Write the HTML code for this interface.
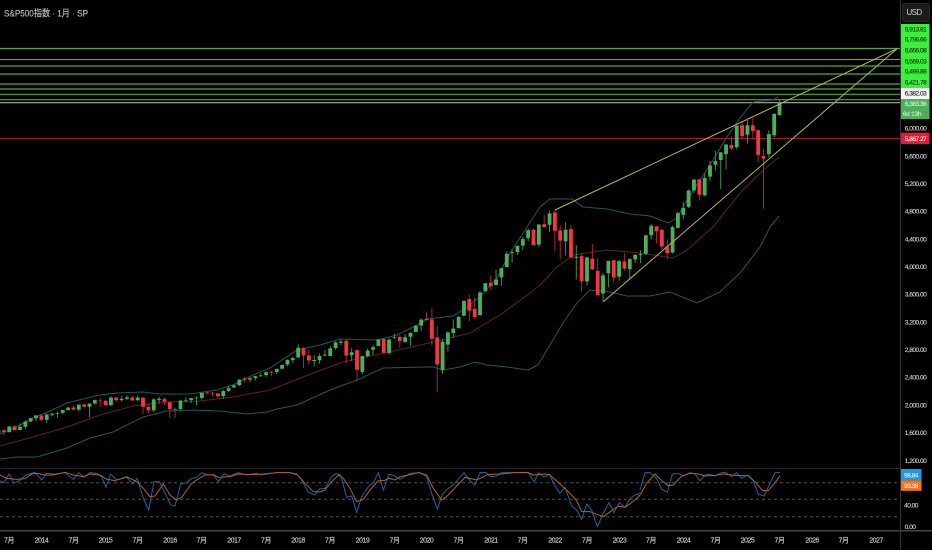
<!DOCTYPE html>
<html lang="ja"><head><meta charset="utf-8"><title>S&amp;P500指数</title>
<style>
html,body{margin:0;padding:0;background:#000;width:932px;height:550px;overflow:hidden}
svg{display:block;filter:blur(.3px)}
text{font-family:"Liberation Sans","Noto Sans CJK JP",sans-serif}
path,polyline{fill:none;vector-effect:non-scaling-stroke}
.ax text{font-size:6.6px;letter-spacing:-.52px;text-anchor:middle;fill:#d4d4d4;stroke:#d4d4d4;stroke-width:.1px}
.t text{font-size:7px;letter-spacing:-.5px;text-anchor:middle;fill:#c8c8c8;stroke:#c8c8c8;stroke-width:.15px}
.d text{fill:#0c2a0b;stroke:#0c2a0b}
</style></head><body>
<svg width="932" height="550" viewBox="0 0 932 550" xmlns="http://www.w3.org/2000/svg">
<rect width="932" height="550" fill="#000"/>
<!-- horizontal levels -->
<g stroke="#58a53c" stroke-width="1.15" fill="none">
<path d="M0 48.5H900M0 59.5H900M0 66H900M0 74H900M0 84H900M0 89H900M0 94.3H900M0 99.7H900"/>
</g>
<path d="M0 102.7H900" stroke="#a6b29c" stroke-width="1.15"/>
<path d="M0 138.5H900" stroke="#981c28" stroke-width="1"/>
<!-- bollinger -->
<polyline stroke="#1d5a58" points="0,434 20,425 33,418 50,411 67,403 83,399 100,395 117,393 143,392 160,394 190,394 217,390 233,385 253,375 270,368 297,350 320,345 340,339 377,340 397,335 417,325 427,319 453,316 463,310 480,297 497,278 510,253 527,227 540,207 550,199 572,199 583,207 607,209 630,214 650,216 668,223 677,218 687,200 700,180 713,160 727,137 740,118 753,102 773,100 778,97"/>
<polyline stroke="#572428" points="0,446 33,437 67,427 100,415 133,406 167,402 200,401 233,397 270,390 303,377 343,362 370,356 403,349 433,342 470,333 503,313 530,293 540,285 557,267 573,255 607,250 640,253 673,258 687,250 713,227 740,193 760,173 779,157"/>
<polyline stroke="#1d5a58" points="0,459 17,457 37,457 67,448 90,438 113,432 143,417 167,411 193,410 220,411 247,414 267,412 277,409 297,405 330,390 357,380 383,368 427,367 433,367 443,370 460,367 475,362 487,365 507,367 528,370 538,365 547,350 560,328 565,320 577,303 590,290 610,292 627,296 650,296 670,292 697,303 720,292 740,273 760,247 770,227 779,216"/>
<!-- candles -->
<g transform="matrix(5.349 0 0 -0.0692 9.3 543.2)">
<path stroke="#3e8f4c" stroke-width="1" d="M-2 1687V1581M0 1698V1604M2 1730V1633M3 1776V1646M4 1814V1747M5 1849V1768M7 1868V1737M8 1884V1835M9 1897V1814M10 1925V1863M11 1968V1915M13 2006V1905M15 2019V1821M16 2076V2001M19 2120V1980M21 2126V2048M22 2135V2067M24 2133V2045M27 2094V1893M28 2116V2019M32 2073V1931M33 2111V2034M34 2103V2026M35 2120V1992M36 2178V2074M40 2214V2084M41 2278V2187M42 2301V2245M43 2371V2271M45 2399V2328M46 2418V2352M47 2454V2405M48 2484V2407M50 2519V2446M51 2582V2521M52 2657V2557M53 2694V2605M54 2873V2683M57 2717V2553M58 2742V2594M59 2791V2698M60 2848V2698M61 2917V2795M62 2941V2864M64 2815V2631M66 2708V2443M67 2813V2681M68 2861V2722M69 2949V2848M71 2964V2729M72 3028V2952M74 3022V2891M75 3050V2855M76 3155V3050M77 3248V3070M81 2954V2447M82 3068V2767M83 3233V2966M84 3280V3115M85 3515V3280M88 3645V3280M89 3760V3633M91 3950V3725M92 3983V3723M93 4218V3992M94 4238V4056M95 4302V4164M96 4429V4233M97 4545V4367M99 4608V4278M101 4808V4495M104 4637V4157M106 4307V3810M108 4140V3721M111 3905V3491M112 4080V3698M114 4094V3794M116 4110V3808M117 4170V4049M118 4231V4048M119 4458V4166M120 4607V4385M124 4587V4187M125 4793V4547M126 4931V4682M127 5111V4845M128 5264V5056M130 5341V5011M131 5523V5234M132 5669V5390M133 5651V5119M134 5767V5402M136 6044V5696M138 6128V5773M142 5968V5578M143 6215V5861M144 6410V6177"/>
<path stroke="#a32a38" stroke-width="1" d="M-1 1654V1560M1 1709V1627M6 1850V1770M12 1991V1930M14 2019V1964M17 2094V1972M18 2072V1988M20 2118V2039M23 2130V2057M25 2113V1867M26 2021V1872M29 2104V1993M30 2038V1812M31 1963V1810M37 2194V2147M38 2187V2120M39 2169V2097M44 2401V2322M49 2491V2417M55 2835V2533M56 2801V2585M63 2940V2603M65 2800V2346M70 2954V2750M73 3013V2822M78 3338V3214M79 3394V2855M80 3136V2191M86 3588V3210M87 3550V3234M90 3870V3663M98 4546V4305M100 4743V4560M102 4818V4222M103 4595V4114M105 4593V4124M107 4177V3636M109 4325V3954M110 4119V3584M113 4100V3764M115 4195V3943M121 4584V4335M122 4541V4238M123 4393V4103M129 5263V4953M135 5878V5674M137 6099V5832M139 6147V5837M140 5986V5504M141 5700V4835"/>
<path stroke="#4caf5a" stroke-width="3.8" d="M-2 1597V1631M0 1606V1686M2 1635V1682M3 1682V1757M4 1758V1806M5 1806V1848M7 1782V1859M8 1857V1872M9 1873V1884M10 1884V1924M11 1924V1960M13 1930V2003M15 1971V2018M16 2019V2068M19 1996V2105M21 2067V2086M22 2088V2107M24 2067V2104M27 1919V2079M28 2072V2088M32 1937V2060M33 2057V2065M34 2067V2097M35 2094V2103M36 2099V2174M40 2128V2199M41 2201V2239M42 2251V2279M43 2285V2364M45 2363V2384M46 2388V2412M47 2415V2423M48 2431V2470M50 2474V2519M51 2521V2575M52 2583V2648M53 2645V2674M54 2683V2824M57 2633V2648M58 2643V2705M59 2712V2725M60 2705V2816M61 2821V2902M62 2896V2914M64 2717V2760M66 2476V2704M67 2703V2784M68 2798V2834M69 2848V2946M71 2751V2942M72 2971V2980M74 2910V2977M75 2983V3038M76 3050V3141M77 3144V3231M81 2499V2912M82 2869V3044M83 3038V3100M84 3106V3271M85 3288V3500M88 3297V3622M89 3645V3756M91 3731V3811M92 3842V3973M93 3992V4181M94 4191V4204M95 4207V4297M96 4300V4395M97 4407V4522M99 4317V4605M101 4602V4766M104 4363V4530M106 4125V4140M108 3781V4130M111 3609V3871M112 3901V4080M114 3853V4076M116 3963V4109M117 4102V4169M118 4166V4179M119 4181V4450M120 4450V4588M124 4201V4567M125 4559V4769M126 4745V4845M127 4861V5096M128 5098V5254M130 5029V5277M131 5297V5460M132 5471V5522M133 5537V5648M134 5623V5762M136 5723V6032M138 5903V6040M142 5625V5911M143 5896V6205M144 6187V6363"/>
<path stroke="#f23645" stroke-width="3.8" d="M-1 1631V1606M1 1689V1633M6 1845V1783M12 1961V1931M14 2004V1972M17 2065V2059M18 2059V1995M20 2105V2068M23 2105V2063M25 2104V1972M26 1970V1920M29 2082V2044M30 2038V1940M31 1937V1927M37 2178V2165M38 2174V2163M39 2164V2126M44 2381V2363M49 2477V2465M55 2816V2714M56 2715V2641M63 2926V2712M65 2790V2507M70 2952V2752M73 2980V2926M78 3245V3226M79 3235V2954M80 2974V2585M86 3527V3363M87 3386V3270M90 3764V3714M98 4529V4307M100 4610V4567M102 4778V4515M103 4519V4373M105 4540V4131M107 4149V3785M109 4112V3955M110 3936V3585M113 4087V3839M115 4070V3970M121 4578V4507M122 4530V4288M123 4284V4193M129 5257V5035M135 5757V5705M137 6040V5881M139 6040V5954M140 5968V5611M141 5597V5560"/>
</g>
<!-- trend lines -->
<path d="M555 210L897 48.7M603.3 301.7L897 48.7" stroke="#b8b846" stroke-width="1"/>
<!-- panes and axes -->
<path d="M0 468.4H900" stroke="#2c2c2c" stroke-width="1"/>
<path d="M0 530.7H932" stroke="#454545" stroke-width="1.5"/>
<path d="M900.5 0V550" stroke="#333" stroke-width="1"/>
<path d="M0 482.7H900M0 499.3H900M0 516.7H900" stroke="#505050" stroke-width="1" stroke-dasharray="3 3"/>
<!-- stoch rsi -->
<g transform="matrix(.33333 0 0 .33333 0 460)" stroke-width="1">
<polyline stroke="#1c649e" points="0,62 12,68 27,42 42,70 60,60 78,45 105,37 125,60 140,40 165,42 195,38 220,58 237,38 252,52 270,38 290,40 305,50 318,82 332,42 350,60 380,52 398,72 412,55 430,115 446,150 462,65 478,65 495,100 512,135 525,138 542,72 560,68 575,55 590,52 605,38 625,45 640,45 655,65 672,42 690,48 715,38 740,45 770,40 785,45 800,42 830,38 870,38 890,42 905,60 925,97 945,104 960,85"/>
<polyline stroke="#1c649e" transform="translate(960)" points="0,85 15,85 35,50 50,40 62,45 80,112 95,108 110,157 125,110 145,80 160,68 175,38 190,90 207,42 222,47 240,58 270,40 300,38 320,50 335,100 352,147 367,103 385,85 400,75 432,38 450,62 465,75 480,38 497,37 512,50 530,48 545,38 590,38 625,38 642,65 657,38 672,52 688,42 705,78 720,100 735,82 755,138 770,150 785,178 800,132 815,150 832,200 850,160 867,128 882,158 898,128 915,142 930,115 945,105 960,100"/>
<polyline stroke="#1c649e" transform="translate(1920)" points="0,90 15,38 30,38 50,55 65,88 82,97 97,42 115,40 130,48 150,38 165,42 180,62 195,45 210,43 225,48 245,38 258,38 275,50 290,38 305,55 322,45 340,62 355,103 372,108 390,70 405,38 420,37"/>
<polyline stroke="#b0622a" points="0,45 20,55 50,58 75,56 95,42 112,40 135,45 160,45 195,37 220,45 250,50 270,42 300,45 320,58 345,62 380,50 410,65 430,85 450,110 465,108 490,72 510,105 528,120 545,112 575,70 590,60 615,45 640,44 655,52 690,50 715,42 750,44 790,42 830,38 870,38 893,45 915,70 940,95 960,96"/>
<polyline stroke="#b0622a" transform="translate(960)" points="0,96 15,90 35,65 55,45 70,55 90,85 110,125 130,118 150,90 175,62 192,62 207,55 225,60 240,50 265,45 295,38 320,45 340,85 365,120 385,105 410,78 435,52 470,60 505,43 545,42 590,37 625,38 640,45 675,42 690,45 720,72 750,100 770,122 785,155 810,155 850,170 875,152 895,138 915,142 945,120 960,105"/>
<polyline stroke="#b0622a" transform="translate(1920)" points="0,105 20,70 45,42 65,62 85,77 100,75 125,48 150,40 175,42 195,48 225,46 250,42 275,45 300,47 325,47 345,65 368,92 385,92 405,68 420,47"/>
</g>
<!-- title -->
<text x="4" y="16.5" font-size="9.5" fill="#c4c4c4" stroke="#c4c4c4" stroke-width=".1" textLength="84" lengthAdjust="spacingAndGlyphs">S&amp;P500指数 · 1月 · SP</text>
<!-- USD -->
<rect x="902.5" y="3.5" width="27" height="18" rx="2" fill="#1b1b1b" stroke="#2a2a2a"/>
<text x="914" y="15" font-size="8" fill="#d0d0d0" text-anchor="middle" letter-spacing="-.6">USD</text>
<!-- price tags -->
<rect x="901" y="24" width="28.5" height="64" fill="#3af03a"/>
<rect x="901" y="88" width="28.5" height="11" fill="#f4f4f4"/>
<rect x="901" y="99" width="28.5" height="20" fill="#4caf5a"/>
<rect x="901" y="132.7" width="28.5" height="11.3" fill="#f01530"/>
<rect x="901" y="469" width="20.5" height="11.3" fill="#1e98ee"/>
<rect x="901" y="480.3" width="20.5" height="10.5" fill="#f5741c"/>
<g class="ax d">
<text x="915.5" y="31.3">6,913.81</text>
<text x="915.5" y="41.5">6,796.66</text>
<text x="915.5" y="52.3">6,656.08</text>
<text x="915.5" y="63.5">6,569.03</text>
<text x="915.5" y="73.7">6,499.88</text>
<text x="915.5" y="84.7">6,421.78</text>
<text x="915.5" y="95.3" style="fill:#222;stroke:#222">6,382.03</text>
</g>
<g class="ax">
<text x="915.5" y="106" style="fill:#d8efd8;stroke:#d8efd8">6,363.36</text>
<text x="912" y="116" style="fill:#d8efd8;stroke:#d8efd8;letter-spacing:-.3px">6d 13h</text>
<text x="915.5" y="130.5">6,000.00</text>
<text x="915.5" y="141" style="fill:#fff;stroke:#fff">5,867.27</text>
<text x="915.5" y="158.3">5,600.00</text>
<text x="915.5" y="186">5,200.00</text>
<text x="915.5" y="213.6">4,800.00</text>
<text x="915.5" y="241.3">4,400.00</text>
<text x="915.5" y="269">4,000.00</text>
<text x="915.5" y="296.6">3,600.00</text>
<text x="915.5" y="324.4">3,200.00</text>
<text x="915.5" y="352">2,800.00</text>
<text x="915.5" y="379.6">2,400.00</text>
<text x="915.5" y="407.4">2,000.00</text>
<text x="915.5" y="435">1,600.00</text>
<text x="915.5" y="462.8">1,200.00</text>
<text x="911" y="477.5" style="fill:#e8f4ff;stroke:#e8f4ff">98.84</text>
<text x="911" y="488" style="fill:#fff0e0;stroke:#fff0e0">93.38</text>
<text x="911" y="507.5">40.00</text>
<text x="910" y="529">0.00</text>
</g>
<!-- time axis -->
<g class="t">
<text x="9" y="542.5">7月</text><text x="41.5" y="542.5">2014</text><text x="73.5" y="542.5">7月</text><text x="105.5" y="542.5">2015</text><text x="137.5" y="542.5">7月</text><text x="170" y="542.5">2016</text><text x="201.5" y="542.5">7月</text><text x="234" y="542.5">2017</text><text x="266" y="542.5">7月</text><text x="298" y="542.5">2018</text><text x="330" y="542.5">7月</text><text x="362.5" y="542.5">2019</text><text x="394.5" y="542.5">7月</text><text x="426.5" y="542.5">2020</text><text x="458.5" y="542.5">7月</text><text x="491" y="542.5">2021</text><text x="522.5" y="542.5">7月</text><text x="555" y="542.5">2022</text><text x="587" y="542.5">7月</text><text x="619.5" y="542.5">2023</text><text x="651" y="542.5">7月</text><text x="683.5" y="542.5">2024</text><text x="715.5" y="542.5">7月</text><text x="747.5" y="542.5">2025</text><text x="779.5" y="542.5">7月</text><text x="812" y="542.5">2026</text><text x="843.5" y="542.5">7月</text><text x="876" y="542.5">2027</text>
</g>
</svg>
</body></html>
